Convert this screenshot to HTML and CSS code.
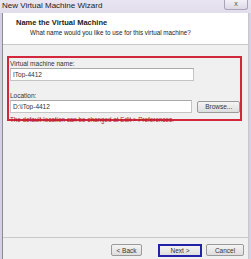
FILE: index.html
```html
<!DOCTYPE html>
<html lang="en">
<head>
    <meta charset="UTF-8">
    <title>New Virtual Machine Wizard</title>
    <link rel="stylesheet" href="styles.css">
</head>
<body>
    <div class="window">
        <!-- 标题栏 -->
        <div class="titlebar">
            <span class="title">New Virtual Machine Wizard</span>
            <span class="close">x</span>
        </div>
        <div class="frame">
            <div class="header">
                <h1>Name the Virtual Machine</h1>
                <p>What name would you like to use for this virtual machine?</p>
            </div>
            <div class="content">
                <div class="marked">
                    <label>Virtual machine name:</label>
                    <div class="row">
                        <input class="field" type="text" value="ITop-4412">
                    </div>
                    <label class="gap">Location:</label>
                    <div class="row">
                        <input class="field" type="text" value="D:\iTop-4412">
                        <button class="btn browse">Browse...</button>
                    </div>
                    <p class="note">The default location can be changed at Edit &gt; Preferences.</p>
                </div>
            </div>
            <div class="footer">
                <button class="btn back">&lt; Back</button>
                <button class="btn next">Next &gt;</button>
                <button class="btn cancel">Cancel</button>
            </div>
        </div>
    </div>
</body>
</html>
```

FILE: styles.css
```css
* {
  margin: 0;
  padding: 0;
  box-sizing: border-box;
}
body {
  width: 251px;
  height: 259px;
  overflow: hidden;
  background: #d6d0e6;
  font-family: "Liberation Sans", Arial, sans-serif;
}
.window {
  height: 259px;
  display: flex;
  flex-direction: column;
}
.titlebar {
  height: 13px;
  display: flex;
  justify-content: space-between;
  align-items: flex-start;
  background: linear-gradient(#e9e5f1, #e2ddec);
  padding-left: 2px;
}
.title {
  font-size: 8px;
  line-height: 12px;
  color: #222;
}
.close {
  width: 24px;
  height: 10px;
  margin-right: 3px;
  border: 1px solid #a9a4b8;
  border-top: none;
  border-radius: 0 0 3px 3px;
  background: linear-gradient(#f3f1f7, #dcd8e6);
  font-size: 7px;
  line-height: 8px;
  text-align: center;
  color: #555;
}
.frame {
  flex: 1;
  display: flex;
  flex-direction: column;
  margin-left: 2px;
  margin-right: 2px;
  border-left: 1px solid #8c8c8c;
  border-right: 1px solid #c8c8c8;
  background: #f0f0f0;
}
.header {
  height: 32px;
  background: #fff;
  border-bottom: 1px solid #c9c9c9;
  padding: 5px 0 0 13px;
  color: #222;
}
.header h1 {
  font-size: 7.5px;
  font-weight: bold;
  line-height: 10px;
}
.header p {
  font-size: 6.3px;
  line-height: 10px;
  padding-left: 14px;
}
.content {
  flex: 1;
  padding: 11px 6px 0 4px;
}
.marked {
  height: 65px;
  border: 2px solid #d2283c;
  padding: 2px 0 0 1px;
}
.marked label {
  display: block;
  font-size: 6.5px;
  line-height: 8px;
  color: #333;
}
.marked .gap {
  margin-top: 11px;
}
.row {
  display: flex;
  gap: 5px;
  align-items: center;
}
.field {
  width: 184px;
  height: 13px;
  border: 1px solid #c4c4c4;
  border-top-color: #a8a8a8;
  background: #fff;
  font: 6.5px "Liberation Sans", Arial, sans-serif;
  color: #333;
  padding-left: 2px;
  outline: none;
}
.btn {
  height: 12px;
  border: 1px solid #9a9a9a;
  border-radius: 2px;
  background: linear-gradient(#f4f4f4, #dedede);
  font: 6.5px "Liberation Sans", Arial, sans-serif;
  color: #333;
}
.browse {
  width: 43px;
}
.note {
  margin-top: 3px;
  font-size: 6.3px;
  line-height: 8px;
  color: #b0182a;
  white-space: nowrap;
}
.footer {
  height: 22px;
  border-top: 1px solid #c9c9c9;
  display: flex;
  justify-content: flex-end;
  gap: 4px;
  padding: 6px 4px 0 0;
}
.back {
  width: 31px;
  margin-right: 12px;
}
.next {
  width: 44px;
  height: 13px;
  border: 2px solid #2222a8;
  border-radius: 0;
}
.cancel {
  width: 38px;
}
```
